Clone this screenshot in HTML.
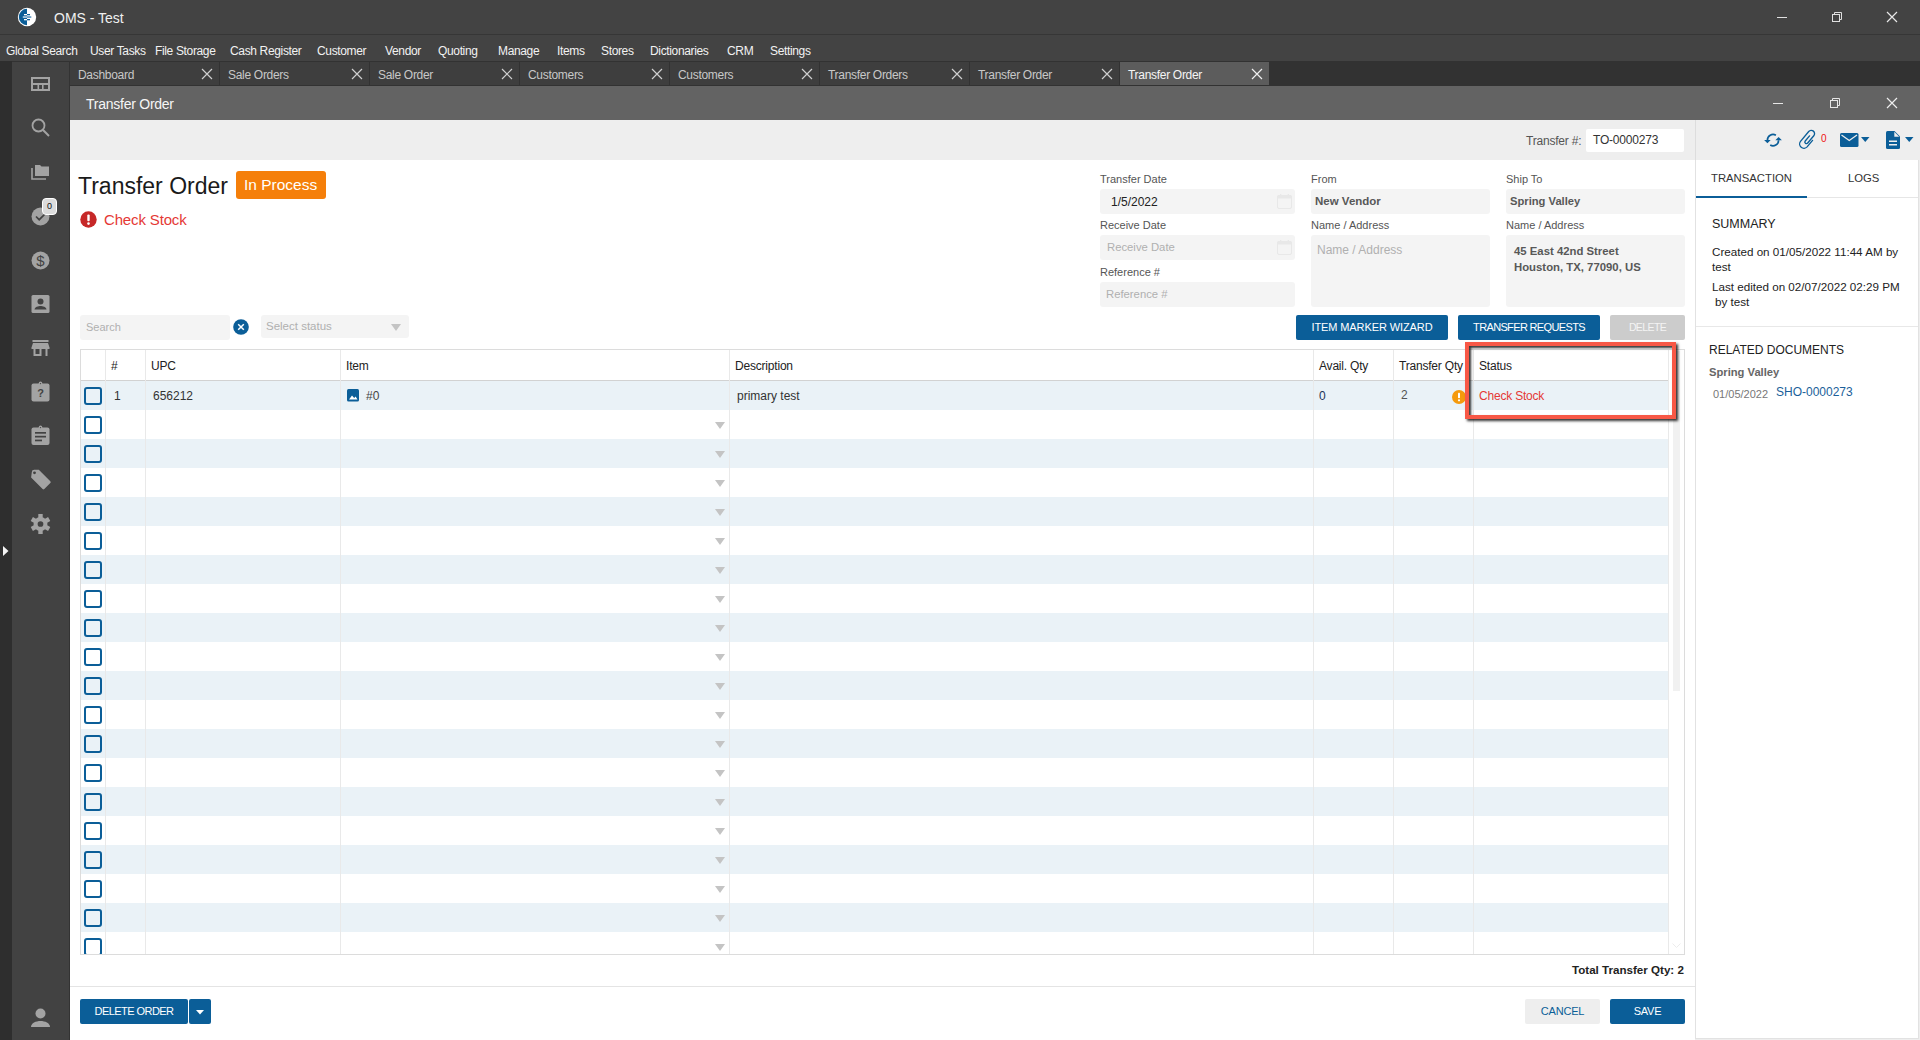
<!DOCTYPE html>
<html><head><meta charset="utf-8">
<style>
*{box-sizing:border-box;margin:0;padding:0}
html,body{width:1920px;height:1040px;overflow:hidden;background:#ffffff;font-family:"Liberation Sans",sans-serif;}
.a{position:absolute}
.t{position:absolute;white-space:nowrap;line-height:1}
#titlebar{left:0;top:0;width:1920px;height:34px;background:#434343}
#titleline{left:0;top:34px;width:1920px;height:1px;background:#363636}
#menubar{left:0;top:35px;width:1920px;height:26px;background:#434343}
.menu{color:#f2f2f2;font-size:12px;letter-spacing:-0.35px;top:45px}
#strip{left:0;top:61px;width:12px;height:979px;background:#2e2e2e}
#sidebar{left:12px;top:62px;width:57px;height:978px;background:#424242}
#tabbar{left:0px;top:61px;width:1920px;height:25px;background:#323232}
#sideline{left:69px;top:61px;width:1px;height:979px;background:#333}
.tab{top:62px;height:23px;width:149px;background:#3e3e3e}
.tabtxt{color:#c9c9c9;font-size:12px;letter-spacing:-0.3px;top:69px}
#wintitle{left:70px;top:86px;width:1850px;height:34px;background:#636363}
#toolbar{left:70px;top:120px;width:1850px;height:40px;background:#eeeeee}
</style></head><body>
<div class="a" id="titlebar"></div>
<div class="a" id="titleline"></div>
<div class="a" id="menubar"></div>
<!-- logo -->
<svg class="a" style="left:17px;top:7px" width="20" height="20" viewBox="0 0 20 20">
<circle cx="10" cy="10" r="9.2" fill="#ffffff"/>
<path d="M10 1.8 A8.2 8.2 0 0 0 10 18.2 Z" fill="#0b5e98"/>
<rect x="7" y="7" width="3" height="1.3" fill="#fff"/><rect x="10" y="7" width="3" height="1.3" fill="#0b5e98"/>
<rect x="5.8" y="9.3" width="4.2" height="1.5" fill="#c9dcea"/><rect x="10" y="9.3" width="4.3" height="1.5" fill="#4d8cba"/>
<rect x="7" y="12" width="3" height="1.3" fill="#fff"/><rect x="10" y="12" width="3" height="1.3" fill="#0b5e98"/>
</svg>
<div class="t" style="left:54px;top:11px;color:#f0f0f0;font-size:14px">OMS - Test</div>
<!-- window controls -->
<div class="a" style="left:1777px;top:17px;width:10px;height:1px;background:#e0e0e0"></div>
<svg class="a" style="left:1831px;top:11px" width="12" height="12" viewBox="0 0 12 12"><rect x="1.5" y="3.5" width="7" height="7" fill="none" stroke="#e0e0e0"/><path d="M3.5 3.5V1.5H10.5V8.5H8.5" fill="none" stroke="#e0e0e0"/></svg>
<svg class="a" style="left:1886px;top:11px" width="12" height="12" viewBox="0 0 12 12"><path d="M1 1L11 11M11 1L1 11" stroke="#e8e8e8" stroke-width="1.2"/></svg>

<div class="t menu" style="left:6px">Global Search</div>
<div class="t menu" style="left:90px">User Tasks</div>
<div class="t menu" style="left:155px">File Storage</div>
<div class="t menu" style="left:230px">Cash Register</div>
<div class="t menu" style="left:317px">Customer</div>
<div class="t menu" style="left:385px">Vendor</div>
<div class="t menu" style="left:438px">Quoting</div>
<div class="t menu" style="left:498px">Manage</div>
<div class="t menu" style="left:557px">Items</div>
<div class="t menu" style="left:601px">Stores</div>
<div class="t menu" style="left:650px">Dictionaries</div>
<div class="t menu" style="left:727px">CRM</div>
<div class="t menu" style="left:770px">Settings</div>

<div class="a" id="tabbar"></div>
<div class="a" id="strip"></div>
<div class="a" id="sidebar"></div>
<div class="a" id="sideline"></div>
<div class="a tab" style="left:70px;background:#3e3e3e"></div>
<div class="t tabtxt" style="left:78px;color:#c8c8c8">Dashboard</div>
<svg class="a" style="left:201px;top:68px" width="12" height="12" viewBox="0 0 12 12"><path d="M1 1L11 11M11 1L1 11" stroke="#cfcfcf" stroke-width="1.2"/></svg>
<div class="a tab" style="left:220px;background:#3e3e3e"></div>
<div class="t tabtxt" style="left:228px;color:#c8c8c8">Sale Orders</div>
<svg class="a" style="left:351px;top:68px" width="12" height="12" viewBox="0 0 12 12"><path d="M1 1L11 11M11 1L1 11" stroke="#cfcfcf" stroke-width="1.2"/></svg>
<div class="a tab" style="left:370px;background:#3e3e3e"></div>
<div class="t tabtxt" style="left:378px;color:#c8c8c8">Sale Order</div>
<svg class="a" style="left:501px;top:68px" width="12" height="12" viewBox="0 0 12 12"><path d="M1 1L11 11M11 1L1 11" stroke="#cfcfcf" stroke-width="1.2"/></svg>
<div class="a tab" style="left:520px;background:#3e3e3e"></div>
<div class="t tabtxt" style="left:528px;color:#c8c8c8">Customers</div>
<svg class="a" style="left:651px;top:68px" width="12" height="12" viewBox="0 0 12 12"><path d="M1 1L11 11M11 1L1 11" stroke="#cfcfcf" stroke-width="1.2"/></svg>
<div class="a tab" style="left:670px;background:#3e3e3e"></div>
<div class="t tabtxt" style="left:678px;color:#c8c8c8">Customers</div>
<svg class="a" style="left:801px;top:68px" width="12" height="12" viewBox="0 0 12 12"><path d="M1 1L11 11M11 1L1 11" stroke="#cfcfcf" stroke-width="1.2"/></svg>
<div class="a tab" style="left:820px;background:#3e3e3e"></div>
<div class="t tabtxt" style="left:828px;color:#c8c8c8">Transfer Orders</div>
<svg class="a" style="left:951px;top:68px" width="12" height="12" viewBox="0 0 12 12"><path d="M1 1L11 11M11 1L1 11" stroke="#cfcfcf" stroke-width="1.2"/></svg>
<div class="a tab" style="left:970px;background:#3e3e3e"></div>
<div class="t tabtxt" style="left:978px;color:#c8c8c8">Transfer Order</div>
<svg class="a" style="left:1101px;top:68px" width="12" height="12" viewBox="0 0 12 12"><path d="M1 1L11 11M11 1L1 11" stroke="#cfcfcf" stroke-width="1.2"/></svg>
<div class="a tab" style="left:1120px;background:#5c5c5c"></div>
<div class="t tabtxt" style="left:1128px;color:#f5f5f5">Transfer Order</div>
<svg class="a" style="left:1251px;top:68px" width="12" height="12" viewBox="0 0 12 12"><path d="M1 1L11 11M11 1L1 11" stroke="#f0f0f0" stroke-width="1.2"/></svg>
<div class="a" id="wintitle"></div>
<div class="t" style="left:86px;top:97px;color:#f6f6f6;font-size:14px;letter-spacing:-0.25px">Transfer Order</div>
<div class="a" id="toolbar"></div>


<!-- window title controls -->
<div class="a" style="left:1773px;top:103px;width:10px;height:1px;background:#e6e6e6"></div>
<svg class="a" style="left:1829px;top:97px" width="12" height="12" viewBox="0 0 12 12"><rect x="1.5" y="3.5" width="7" height="7" fill="none" stroke="#e6e6e6"/><path d="M3.5 3.5V1.5H10.5V8.5H8.5" fill="none" stroke="#e6e6e6"/></svg>
<svg class="a" style="left:1886px;top:97px" width="12" height="12" viewBox="0 0 12 12"><path d="M1 1L11 11M11 1L1 11" stroke="#eeeeee" stroke-width="1.2"/></svg>

<!-- main white panel + right panel -->
<div class="a" style="left:70px;top:160px;width:1625px;height:880px;background:#ffffff"></div>
<div class="a" style="left:1695px;top:120px;width:1px;height:920px;background:#dddddd"></div>
<div class="a" style="left:1696px;top:160px;width:1224px;height:880px;background:#ffffff"></div>

<!-- toolbar: transfer # -->
<div class="t" style="left:1526px;top:135px;color:#555;font-size:12px;letter-spacing:-0.2px">Transfer #:</div>
<div class="a" style="left:1586px;top:129px;width:98px;height:23px;background:#fff;border-radius:2px"></div>
<div class="t" style="left:1593px;top:134px;color:#333;font-size:12px;letter-spacing:-0.2px">TO-0000273</div>

<!-- sidebar icons -->
<svg class="a" style="left:31px;top:77px" width="19" height="14" viewBox="0 0 19 14"><rect x="1" y="1" width="17" height="12" fill="none" stroke="#a3a3a3" stroke-width="2"/><rect x="1" y="6" width="17" height="2" fill="#a3a3a3"/><rect x="6.5" y="7" width="1.6" height="6" fill="#a3a3a3"/><rect x="11" y="7" width="1.6" height="6" fill="#a3a3a3"/></svg>
<svg class="a" style="left:30px;top:117px" width="22" height="22" viewBox="0 0 22 22"><circle cx="8.5" cy="8.5" r="6" fill="none" stroke="#a3a3a3" stroke-width="1.8"/><path d="M12.8 12.8L19 19" stroke="#a3a3a3" stroke-width="2"/></svg>
<svg class="a" style="left:31px;top:164px" width="19" height="16" viewBox="0 0 19 16"><path d="M4 1h5l1.5 1.6H18V12H4z" fill="#a3a3a3"/><path d="M1 4v11h14" fill="none" stroke="#a3a3a3" stroke-width="1.6"/></svg>
<svg class="a" style="left:31px;top:207px" width="19" height="19" viewBox="0 0 19 19"><circle cx="9.5" cy="9.5" r="9" fill="#a3a3a3"/><path d="M5 9.5l3.2 3.2L14.5 6.5" fill="none" stroke="#424242" stroke-width="1.7"/></svg>
<div class="a" style="left:42px;top:198px;width:15px;height:17px;background:#dcdcdc;border:1.5px solid #fff;border-radius:4px"></div>
<div class="t" style="left:47px;top:202px;color:#111;font-size:9px">0</div>
<svg class="a" style="left:31px;top:251px" width="19" height="19" viewBox="0 0 19 19"><circle cx="9.5" cy="9.5" r="9" fill="#a3a3a3"/><text x="9.5" y="15" text-anchor="middle" font-family="Liberation Sans" font-size="15" fill="#424242">$</text></svg>
<svg class="a" style="left:31px;top:295px" width="19" height="19" viewBox="0 0 19 19"><rect x="0.5" y="0" width="18" height="18" rx="1.5" fill="#a3a3a3"/><circle cx="9.5" cy="6.5" r="3" fill="#424242"/><path d="M3.5 14.5c0-2.5 4-3.6 6-3.6s6 1.1 6 3.6z" fill="#424242"/></svg>
<svg class="a" style="left:31px;top:340px" width="19" height="17" viewBox="0 0 19 17"><rect x="1.5" y="0" width="16" height="2" fill="#a3a3a3"/><path d="M2 3h15l1.5 4.5V9h-18V7.5z" fill="#a3a3a3"/><path d="M2.5 9h2v7h-2zM14.5 9h2v7h-2zM4.5 14h6v2h-6zM8.5 9h2v7h-2z" fill="#a3a3a3"/></svg>
<svg class="a" style="left:31px;top:381px" width="19" height="21" viewBox="0 0 19 21"><rect x="0.5" y="2.5" width="18" height="18" rx="2" fill="#a3a3a3"/><circle cx="9.5" cy="2.3" r="1.8" fill="#a3a3a3"/><circle cx="9.5" cy="2.6" r="0.7" fill="#424242"/><text x="9.5" y="16" text-anchor="middle" font-family="Liberation Sans" font-weight="bold" font-size="11" fill="#424242">?</text></svg>
<svg class="a" style="left:31px;top:425px" width="19" height="21" viewBox="0 0 19 21"><rect x="0.5" y="2.5" width="18" height="17.5" rx="2" fill="#a3a3a3"/><circle cx="9.5" cy="2.3" r="1.8" fill="#a3a3a3"/><circle cx="9.5" cy="2.6" r="0.7" fill="#424242"/><rect x="4" y="7" width="11" height="1.7" fill="#424242"/><rect x="4" y="10.8" width="11" height="1.7" fill="#424242"/><rect x="4" y="14.6" width="7" height="1.7" fill="#424242"/></svg>
<svg class="a" style="left:30px;top:469px" width="21" height="21" viewBox="0 0 21 21"><path d="M1.5 3.2Q1.5 0.8 4 0.8H8.5L20 12.3Q20.8 13.1 20 14L14 20Q13.1 20.8 12.3 20L0.8 8.5z" fill="#a3a3a3" transform="translate(0.3 0)"/><circle cx="4.5" cy="3.8" r="1.4" fill="#424242"/></svg>
<svg class="a" style="left:30px;top:513px" width="21" height="22" viewBox="-11 -11 22 22"><g fill="#a3a3a3"><circle r="7.3"/><rect x="-2.3" y="-10.5" width="4.6" height="21"/><rect x="-2.3" y="-10.5" width="4.6" height="21" transform="rotate(60)"/><rect x="-2.3" y="-10.5" width="4.6" height="21" transform="rotate(120)"/></g><circle r="3" fill="#424242"/></svg>
<svg class="a" style="left:3px;top:546px" width="6" height="10" viewBox="0 0 6 10"><path d="M0 0L5.5 5L0 10z" fill="#f4f4f4"/></svg>
<svg class="a" style="left:30px;top:1008px" width="21" height="20" viewBox="0 0 21 20"><circle cx="10.5" cy="5.5" r="5" fill="#a3a3a3"/><path d="M1 19c0-4 5-6 9.5-6s9.5 2 9.5 6z" fill="#a3a3a3"/></svg>

<!-- right panel -->
<div class="a" style="left:1695px;top:160px;width:225px;height:880px;background:#eeeeee"></div>
<div class="a" style="left:1695px;top:160px;width:224px;height:879px;background:#ffffff;border-left:1px solid #e2e2e2;border-right:1px solid #e2e2e2;border-bottom:1px solid #e2e2e2"></div>
<div class="t" style="left:1711px;top:173px;color:#333;font-size:11.3px;letter-spacing:0px">TRANSACTION</div>
<div class="t" style="left:1848px;top:173px;color:#333;font-size:11.3px">LOGS</div>
<div class="a" style="left:1696px;top:197px;width:222px;height:1px;background:#e6e6e6"></div>
<div class="a" style="left:1696px;top:196px;width:111px;height:2px;background:#0b5e98"></div>
<div class="t" style="left:1712px;top:218px;color:#222;font-size:12.5px">SUMMARY</div>
<div class="t" style="left:1712px;top:246px;color:#222;font-size:11.65px">Created on 01/05/2022 11:44 AM by</div>
<div class="t" style="left:1712px;top:261px;color:#222;font-size:11.65px">test</div>
<div class="t" style="left:1712px;top:281px;color:#222;font-size:11.65px">Last edited on 02/07/2022 02:29 PM</div>
<div class="t" style="left:1715px;top:296px;color:#222;font-size:11.65px">by test</div>
<div class="a" style="left:1696px;top:326px;width:222px;height:1px;background:#e8e8e8"></div>
<div class="t" style="left:1709px;top:344px;color:#222;font-size:12px">RELATED DOCUMENTS</div>
<div class="t" style="left:1709px;top:367px;color:#666;font-size:11.2px;font-weight:bold">Spring Valley</div>
<div class="t" style="left:1713px;top:389px;color:#777;font-size:11px">01/05/2022</div>
<div class="t" style="left:1776px;top:386px;color:#1b5f9a;font-size:12px">SHO-0000273</div>

<!-- toolbar icons -->
<svg class="a" style="left:1760px;top:128px" width="24" height="22" viewBox="0 0 24 22"><path d="M15.9 7.3A5.6 5.6 0 0 0 7.4 12.2" fill="none" stroke="#0b5e98" stroke-width="1.7"/><path d="M10.2 17.1A5.6 5.6 0 0 0 18.6 12.2" fill="none" stroke="#0b5e98" stroke-width="1.7"/><path d="M4.1 12.1h6.6L7.4 15.3z" fill="#0b5e98"/><path d="M15.3 12.3h6.6L18.6 9.1z" fill="#0b5e98"/></svg>
<svg class="a" style="left:1796px;top:128px" width="22" height="24" viewBox="0 0 22 24"><path d="M16.56 12.35 L11.09 18.86 A4.3 4.3 0 0 1 4.51 13.34 L12.73 3.53 A3.3 3.3 0 0 1 17.79 7.77 L11.68 15.05 A1.6 1.6 0 0 1 9.23 12.99 L13.54 7.86" fill="none" stroke="#0b5e98" stroke-width="1.35" stroke-linecap="round"/></svg>
<div class="t" style="left:1821px;top:134px;color:#ee1111;font-size:10px">0</div>
<svg class="a" style="left:1840px;top:133px" width="19" height="14" viewBox="0 0 19 14"><rect x="0" y="0" width="18.5" height="14" rx="1.5" fill="#0b5e98"/><path d="M1.5 2L9.25 7.5L17 2" fill="none" stroke="#eeeeee" stroke-width="1.3"/></svg>
<svg class="a" style="left:1861px;top:137px" width="9" height="5" viewBox="0 0 9 5"><path d="M0 0h8.5L4.25 5z" fill="#0b5e98"/></svg>
<svg class="a" style="left:1886px;top:131px" width="15" height="18" viewBox="0 0 15 18"><path d="M1.5 0H8.5L14 5.5V16.5Q14 18 12.5 18H1.5Q0 18 0 16.5V1.5Q0 0 1.5 0z" fill="#0b5e98"/><path d="M8.3 0.8V5.8H13.2z" fill="#eeeeee"/><rect x="3" y="9.5" width="8" height="1.5" fill="#eeeeee"/><rect x="3" y="13" width="8" height="1.5" fill="#eeeeee"/></svg>
<svg class="a" style="left:1905px;top:137px" width="9" height="5" viewBox="0 0 9 5"><path d="M0 0h8.5L4.25 5z" fill="#0b5e98"/></svg>

<!-- header -->
<div class="t" style="left:78px;top:175px;color:#1a1a1a;font-size:23px;letter-spacing:0px">Transfer Order</div>
<div class="a" style="left:236px;top:171px;width:90px;height:28px;background:#f57f0a;border-radius:3px"></div>
<div class="t" style="left:244px;top:177px;color:#fff;font-size:15.5px;letter-spacing:0px">In Process</div>
<svg class="a" style="left:80px;top:211px" width="17" height="17" viewBox="0 0 17 17"><circle cx="8.5" cy="8.5" r="8.2" fill="#c62828"/><rect x="7.3" y="3.6" width="2.4" height="6.6" rx="1" fill="#fff"/><circle cx="8.5" cy="12.6" r="1.3" fill="#fff"/></svg>
<div class="t" style="left:104px;top:212px;color:#e53935;font-size:15px;letter-spacing:-0.15px">Check Stock</div>

<div class="t" style="left:1100px;top:174px;color:#555;font-size:11px">Transfer Date</div>
<div class="a" style="left:1100px;top:189px;width:195px;height:25px;background:#f4f4f4;border-radius:3px"></div>
<div class="t" style="left:1111px;top:196px;color:#222;font-size:12px">1/5/2022</div>
<svg class="a" style="left:1277px;top:194px" width="15" height="15" viewBox="0 0 15 15"><rect x="0.5" y="1.5" width="14" height="13" rx="1.5" fill="none" stroke="#e8e8e8"/><rect x="0.5" y="1.5" width="14" height="3" fill="#e8e8e8"/><rect x="3" y="0" width="1.3" height="3" fill="#e8e8e8"/><rect x="10.7" y="0" width="1.3" height="3" fill="#e8e8e8"/></svg>
<div class="t" style="left:1100px;top:220px;color:#555;font-size:11px">Receive Date</div>
<div class="a" style="left:1100px;top:235px;width:195px;height:25px;background:#f4f4f4;border-radius:3px"></div>
<div class="t" style="left:1107px;top:242px;color:#b0b0b0;font-size:11.3px">Receive Date</div>
<svg class="a" style="left:1277px;top:240px" width="15" height="15" viewBox="0 0 15 15"><rect x="0.5" y="1.5" width="14" height="13" rx="1.5" fill="none" stroke="#e8e8e8"/><rect x="0.5" y="1.5" width="14" height="3" fill="#e8e8e8"/><rect x="3" y="0" width="1.3" height="3" fill="#e8e8e8"/><rect x="10.7" y="0" width="1.3" height="3" fill="#e8e8e8"/></svg>
<div class="t" style="left:1100px;top:267px;color:#555;font-size:11px">Reference #</div>
<div class="a" style="left:1100px;top:282px;width:195px;height:25px;background:#f4f4f4;border-radius:3px"></div>
<div class="t" style="left:1106px;top:289px;color:#b0b0b0;font-size:11.3px">Reference #</div>
<div class="t" style="left:1311px;top:174px;color:#555;font-size:11px">From</div>
<div class="a" style="left:1311px;top:189px;width:179px;height:25px;background:#f4f4f4;border-radius:3px"></div>
<div class="t" style="left:1315px;top:196px;color:#585858;font-size:11.5px;font-weight:bold">New Vendor</div>
<div class="t" style="left:1311px;top:220px;color:#555;font-size:11px">Name / Address</div>
<div class="a" style="left:1311px;top:235px;width:179px;height:72px;background:#f4f4f4;border-radius:3px"></div>
<div class="t" style="left:1317px;top:244px;color:#b0b0b0;font-size:12px">Name / Address</div>
<div class="t" style="left:1506px;top:174px;color:#555;font-size:11px">Ship To</div>
<div class="a" style="left:1506px;top:189px;width:179px;height:25px;background:#f4f4f4;border-radius:3px"></div>
<div class="t" style="left:1510px;top:196px;color:#585858;font-size:11.2px;font-weight:bold">Spring Valley</div>
<div class="t" style="left:1506px;top:220px;color:#555;font-size:11px">Name / Address</div>
<div class="a" style="left:1506px;top:235px;width:179px;height:72px;background:#f4f4f4;border-radius:3px"></div>
<div class="t" style="left:1514px;top:246px;color:#585858;font-size:11.35px;font-weight:bold">45 East 42nd Street</div>
<div class="t" style="left:1514px;top:262px;color:#585858;font-size:11.35px;font-weight:bold">Houston, TX, 77090, US</div>
<div class="a" style="left:80px;top:315px;width:150px;height:25px;background:#f4f4f4;border-radius:3px"></div>
<div class="t" style="left:86px;top:322px;color:#b0b0b0;font-size:11px">Search</div>
<svg class="a" style="left:233px;top:319px" width="16" height="16" viewBox="0 0 16 16"><circle cx="8" cy="8" r="7.8" fill="#0b5e98"/><path d="M5.2 5.2L10.8 10.8M10.8 5.2L5.2 10.8" stroke="#fff" stroke-width="1.5"/></svg>
<div class="a" style="left:261px;top:315px;width:148px;height:23px;background:#f4f4f4;border-radius:3px"></div>
<div class="t" style="left:266px;top:321px;color:#b0b0b0;font-size:11.5px">Select status</div>
<svg class="a" style="left:391px;top:324px" width="10" height="7" viewBox="0 0 10 7"><path d="M0 0h10L5 7z" fill="#c4c4c4"/></svg>
<div class="a" style="left:1296px;top:315px;width:152px;height:25px;background:#0b5e98;border-radius:2px;color:#fff;font-size:11px;letter-spacing:-0.1px;line-height:25px;text-align:center;white-space:nowrap">ITEM MARKER WIZARD</div>
<div class="a" style="left:1458px;top:315px;width:142px;height:25px;background:#0b5e98;border-radius:2px;color:#fff;font-size:11px;letter-spacing:-0.65px;line-height:25px;text-align:center;white-space:nowrap">TRANSFER REQUESTS</div>
<div class="a" style="left:1610px;top:315px;width:75px;height:25px;background:#cccccc;border-radius:2px;color:#f4f4f4;font-size:10.5px;letter-spacing:-0.6px;line-height:25px;text-align:center;white-space:nowrap">DELETE</div>
<!-- table -->
<div class="a" style="left:80px;top:349px;width:1605px;height:606px;border:1px solid #dcdcdc;background:#fff"></div>
<div class="a" style="left:81px;top:380px;width:1587px;height:1px;background:#d2d2d2"></div>
<div class="a" style="left:81px;top:381px;width:1587px;height:29px;background:#eaf2f7"></div>
<div class="a" style="left:81px;top:439px;width:1587px;height:29px;background:#eaf2f7"></div>
<div class="a" style="left:81px;top:497px;width:1587px;height:29px;background:#eaf2f7"></div>
<div class="a" style="left:81px;top:555px;width:1587px;height:29px;background:#eaf2f7"></div>
<div class="a" style="left:81px;top:613px;width:1587px;height:29px;background:#eaf2f7"></div>
<div class="a" style="left:81px;top:671px;width:1587px;height:29px;background:#eaf2f7"></div>
<div class="a" style="left:81px;top:729px;width:1587px;height:29px;background:#eaf2f7"></div>
<div class="a" style="left:81px;top:787px;width:1587px;height:29px;background:#eaf2f7"></div>
<div class="a" style="left:81px;top:845px;width:1587px;height:29px;background:#eaf2f7"></div>
<div class="a" style="left:81px;top:903px;width:1587px;height:29px;background:#eaf2f7"></div>
<div class="a" style="left:105px;top:350px;width:1px;height:604px;background:#e9e9e9"></div>
<div class="a" style="left:145px;top:350px;width:1px;height:604px;background:#e9e9e9"></div>
<div class="a" style="left:340px;top:350px;width:1px;height:604px;background:#e9e9e9"></div>
<div class="a" style="left:729px;top:350px;width:1px;height:604px;background:#e9e9e9"></div>
<div class="a" style="left:1313px;top:350px;width:1px;height:604px;background:#e9e9e9"></div>
<div class="a" style="left:1393px;top:350px;width:1px;height:604px;background:#e9e9e9"></div>
<div class="a" style="left:1473px;top:350px;width:1px;height:604px;background:#e9e9e9"></div>
<div class="a" style="left:1668px;top:350px;width:1px;height:604px;background:#e9e9e9"></div>
<div class="a" style="left:1673px;top:351px;width:7px;height:340px;background:#f1f1f1"></div>
<div class="t" style="left:111px;top:360px;color:#222;font-size:12px;letter-spacing:-0.2px">#</div>
<div class="t" style="left:151px;top:360px;color:#222;font-size:12px;letter-spacing:-0.2px">UPC</div>
<div class="t" style="left:346px;top:360px;color:#222;font-size:12px;letter-spacing:-0.2px">Item</div>
<div class="t" style="left:735px;top:360px;color:#222;font-size:12px;letter-spacing:-0.2px">Description</div>
<div class="t" style="left:1319px;top:360px;color:#222;font-size:12px;letter-spacing:-0.2px">Avail. Qty</div>
<div class="t" style="left:1399px;top:360px;color:#222;font-size:12px;letter-spacing:-0.2px">Transfer Qty</div>
<div class="t" style="left:1479px;top:360px;color:#222;font-size:12px;letter-spacing:-0.2px">Status</div>
<div class="a" style="left:84px;top:387px;width:18px;height:18px;border:2.2px solid #0b5e98;border-radius:3px"></div>
<div class="a" style="left:84px;top:416px;width:18px;height:18px;border:2.2px solid #0b5e98;border-radius:3px"></div>
<div class="a" style="left:84px;top:445px;width:18px;height:18px;border:2.2px solid #0b5e98;border-radius:3px"></div>
<div class="a" style="left:84px;top:474px;width:18px;height:18px;border:2.2px solid #0b5e98;border-radius:3px"></div>
<div class="a" style="left:84px;top:503px;width:18px;height:18px;border:2.2px solid #0b5e98;border-radius:3px"></div>
<div class="a" style="left:84px;top:532px;width:18px;height:18px;border:2.2px solid #0b5e98;border-radius:3px"></div>
<div class="a" style="left:84px;top:561px;width:18px;height:18px;border:2.2px solid #0b5e98;border-radius:3px"></div>
<div class="a" style="left:84px;top:590px;width:18px;height:18px;border:2.2px solid #0b5e98;border-radius:3px"></div>
<div class="a" style="left:84px;top:619px;width:18px;height:18px;border:2.2px solid #0b5e98;border-radius:3px"></div>
<div class="a" style="left:84px;top:648px;width:18px;height:18px;border:2.2px solid #0b5e98;border-radius:3px"></div>
<div class="a" style="left:84px;top:677px;width:18px;height:18px;border:2.2px solid #0b5e98;border-radius:3px"></div>
<div class="a" style="left:84px;top:706px;width:18px;height:18px;border:2.2px solid #0b5e98;border-radius:3px"></div>
<div class="a" style="left:84px;top:735px;width:18px;height:18px;border:2.2px solid #0b5e98;border-radius:3px"></div>
<div class="a" style="left:84px;top:764px;width:18px;height:18px;border:2.2px solid #0b5e98;border-radius:3px"></div>
<div class="a" style="left:84px;top:793px;width:18px;height:18px;border:2.2px solid #0b5e98;border-radius:3px"></div>
<div class="a" style="left:84px;top:822px;width:18px;height:18px;border:2.2px solid #0b5e98;border-radius:3px"></div>
<div class="a" style="left:84px;top:851px;width:18px;height:18px;border:2.2px solid #0b5e98;border-radius:3px"></div>
<div class="a" style="left:84px;top:880px;width:18px;height:18px;border:2.2px solid #0b5e98;border-radius:3px"></div>
<div class="a" style="left:84px;top:909px;width:18px;height:18px;border:2.2px solid #0b5e98;border-radius:3px"></div>
<div class="a" style="left:84px;top:938px;width:18px;height:16px;overflow:hidden"><div class="a" style="left:0;top:0;width:18px;height:18px;border:2.2px solid #0b5e98;border-radius:3px"></div></div>
<svg class="a" style="left:715px;top:422px" width="10" height="7" viewBox="0 0 10 7"><path d="M0 0h10L5 7z" fill="#c4c4c4"/></svg>
<svg class="a" style="left:715px;top:451px" width="10" height="7" viewBox="0 0 10 7"><path d="M0 0h10L5 7z" fill="#c4c4c4"/></svg>
<svg class="a" style="left:715px;top:480px" width="10" height="7" viewBox="0 0 10 7"><path d="M0 0h10L5 7z" fill="#c4c4c4"/></svg>
<svg class="a" style="left:715px;top:509px" width="10" height="7" viewBox="0 0 10 7"><path d="M0 0h10L5 7z" fill="#c4c4c4"/></svg>
<svg class="a" style="left:715px;top:538px" width="10" height="7" viewBox="0 0 10 7"><path d="M0 0h10L5 7z" fill="#c4c4c4"/></svg>
<svg class="a" style="left:715px;top:567px" width="10" height="7" viewBox="0 0 10 7"><path d="M0 0h10L5 7z" fill="#c4c4c4"/></svg>
<svg class="a" style="left:715px;top:596px" width="10" height="7" viewBox="0 0 10 7"><path d="M0 0h10L5 7z" fill="#c4c4c4"/></svg>
<svg class="a" style="left:715px;top:625px" width="10" height="7" viewBox="0 0 10 7"><path d="M0 0h10L5 7z" fill="#c4c4c4"/></svg>
<svg class="a" style="left:715px;top:654px" width="10" height="7" viewBox="0 0 10 7"><path d="M0 0h10L5 7z" fill="#c4c4c4"/></svg>
<svg class="a" style="left:715px;top:683px" width="10" height="7" viewBox="0 0 10 7"><path d="M0 0h10L5 7z" fill="#c4c4c4"/></svg>
<svg class="a" style="left:715px;top:712px" width="10" height="7" viewBox="0 0 10 7"><path d="M0 0h10L5 7z" fill="#c4c4c4"/></svg>
<svg class="a" style="left:715px;top:741px" width="10" height="7" viewBox="0 0 10 7"><path d="M0 0h10L5 7z" fill="#c4c4c4"/></svg>
<svg class="a" style="left:715px;top:770px" width="10" height="7" viewBox="0 0 10 7"><path d="M0 0h10L5 7z" fill="#c4c4c4"/></svg>
<svg class="a" style="left:715px;top:799px" width="10" height="7" viewBox="0 0 10 7"><path d="M0 0h10L5 7z" fill="#c4c4c4"/></svg>
<svg class="a" style="left:715px;top:828px" width="10" height="7" viewBox="0 0 10 7"><path d="M0 0h10L5 7z" fill="#c4c4c4"/></svg>
<svg class="a" style="left:715px;top:857px" width="10" height="7" viewBox="0 0 10 7"><path d="M0 0h10L5 7z" fill="#c4c4c4"/></svg>
<svg class="a" style="left:715px;top:886px" width="10" height="7" viewBox="0 0 10 7"><path d="M0 0h10L5 7z" fill="#c4c4c4"/></svg>
<svg class="a" style="left:715px;top:915px" width="10" height="7" viewBox="0 0 10 7"><path d="M0 0h10L5 7z" fill="#c4c4c4"/></svg>
<svg class="a" style="left:715px;top:944px" width="10" height="7" viewBox="0 0 10 7"><path d="M0 0h10L5 7z" fill="#c4c4c4"/></svg>
<div class="t" style="left:114px;top:390px;color:#333;font-size:12px">1</div>
<div class="t" style="left:153px;top:390px;color:#333;font-size:12px">656212</div>
<svg class="a" style="left:347px;top:389px" width="12" height="13" viewBox="0 0 12 13"><rect x="0" y="0" width="12" height="12.5" rx="1.5" fill="#0b5e98"/><path d="M2 10.5L5 6.5L7.2 9L8.6 7.5L10.5 10.5z" fill="#fff"/></svg>
<div class="t" style="left:366px;top:390px;color:#444;font-size:12px">#0</div>
<div class="t" style="left:737px;top:390px;color:#333;font-size:12px">primary test</div>
<div class="t" style="left:1319px;top:390px;color:#1d3557;font-size:12px">0</div>
<div class="t" style="left:1401px;top:389px;color:#555;font-size:12px">2</div>
<svg class="a" style="left:1452px;top:390px" width="14" height="14" viewBox="0 0 14 14"><circle cx="7" cy="7" r="7" fill="#f59a0c"/><rect x="6" y="2.8" width="2" height="5.4" rx="0.8" fill="#fff"/><circle cx="7" cy="10.3" r="1.1" fill="#fff"/></svg>
<div class="t" style="left:1479px;top:390px;color:#e53935;font-size:12px;letter-spacing:-0.2px">Check Stock</div>
<div class="a" style="left:1465px;top:342px;width:211px;height:77px;border:4px solid #f85846;box-shadow:2px 2px 2.5px rgba(0,0,0,0.8), inset 2px 2px 2.5px rgba(0,0,0,0.8)"></div>
<svg class="a" style="left:1672px;top:943px" width="9" height="6" viewBox="0 0 9 6"><path d="M0.5 0.5L4.5 4.5L8.5 0.5" fill="none" stroke="#ececec" stroke-width="1"/></svg>
<div class="t" style="left:1572px;top:964px;color:#222;font-size:11.6px;font-weight:bold">Total Transfer Qty: 2</div>
<div class="a" style="left:70px;top:986px;width:1625px;height:1px;background:#e4e4e4"></div>
<div class="a" style="left:80px;top:999px;width:108px;height:25px;background:#0b5e98;border-radius:2px;color:#fff;font-size:11px;letter-spacing:-0.55px;line-height:25px;text-align:center;white-space:nowrap">DELETE ORDER</div>
<div class="a" style="left:189px;top:999px;width:22px;height:25px;background:#0b5e98;border-radius:2px"></div>
<svg class="a" style="left:196px;top:1010px" width="8" height="5" viewBox="0 0 8 5"><path d="M0 0h8L4 4.5z" fill="#fff"/></svg>
<div class="a" style="left:1525px;top:999px;width:75px;height:25px;background:#eeeeee;border-radius:2px;color:#0b5e98;font-size:11px;letter-spacing:-0.2px;line-height:25px;text-align:center;white-space:nowrap">CANCEL</div>
<div class="a" style="left:1610px;top:999px;width:75px;height:25px;background:#0b5e98;border-radius:2px;color:#fff;font-size:11px;letter-spacing:-0.2px;line-height:25px;text-align:center;white-space:nowrap">SAVE</div>
</body></html>
